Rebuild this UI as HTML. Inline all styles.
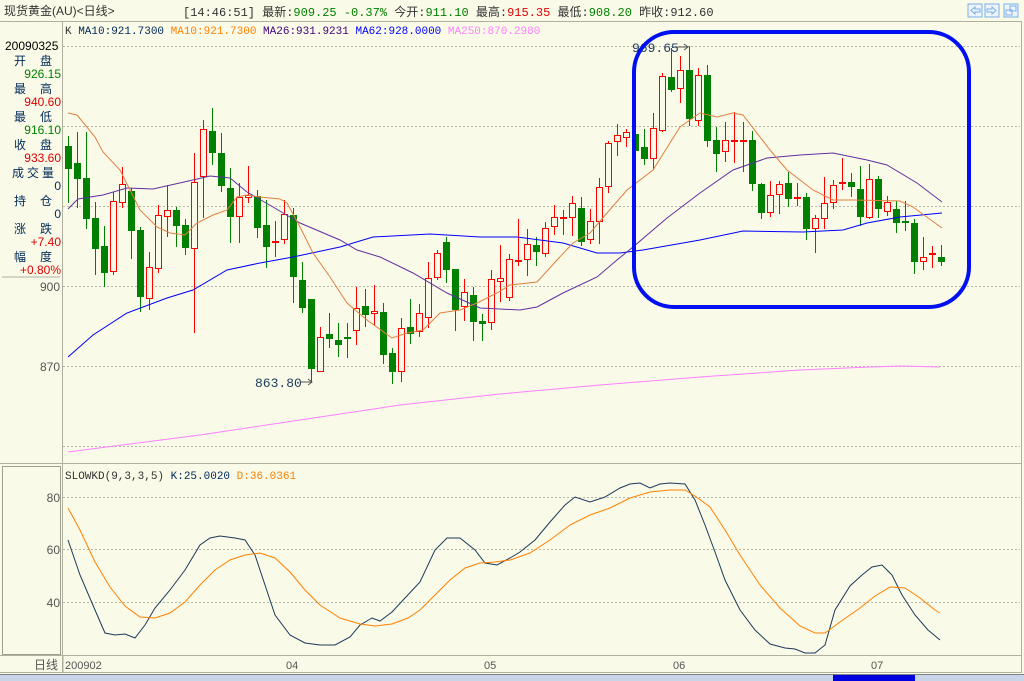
<!DOCTYPE html>
<html><head><meta charset="utf-8"><style>
html,body{margin:0;padding:0;width:1024px;height:681px;overflow:hidden;background:#fafae8;font-family:"Liberation Sans","Noto Sans CJK SC",sans-serif;}
#c{position:absolute;left:0;top:0}
</style></head><body>
<svg id="c" width="1024" height="681" xmlns="http://www.w3.org/2000/svg" font-family="Liberation Mono, Noto Sans CJK SC, monospace">
<rect width="1024" height="681" fill="#fafae8"/>
<line x1="0" y1="21.5" x2="1022" y2="21.5" stroke="#b0b0a0"/>
<text x="4" y="15" font-size="12" fill="#333" font-family="Liberation Sans, Noto Sans CJK SC, sans-serif">现货黄金(AU)&lt;日线&gt;</text>
<text x="183" y="16" font-size="12" fill="#333"><tspan>[14:46:51] 最新:</tspan><tspan fill="#008000">909.25 -0.37%</tspan><tspan> 今开:</tspan><tspan fill="#008000">911.10</tspan><tspan> 最高:</tspan><tspan fill="#e00000">915.35</tspan><tspan> 最低:</tspan><tspan fill="#008000">908.20</tspan><tspan> 昨收:912.60</tspan></text>
<g fill="#eef4fb" stroke="#7ab0e8"><rect x="968" y="4" width="14" height="13"/><rect x="985" y="4" width="14" height="13"/><rect x="1004" y="4" width="14" height="13"/></g>
<g fill="none" stroke="#7ab0e8"><path d="M971 10.5 L975 7 V9 H980 V12 H975 V14 Z"/><path d="M996 10.5 L992 7 V9 H987 V12 H992 V14 Z"/><rect x="1010" y="6" width="6" height="5"/><rect x="1006" y="10" width="6" height="5"/></g>
<line x1="1021.5" y1="22" x2="1021.5" y2="672" stroke="#b0b0a0"/>
<!-- left panel -->
<line x1="62.5" y1="22" x2="62.5" y2="672" stroke="#b0b0a0"/>
<line x1="0" y1="463.5" x2="1022" y2="463.5" stroke="#b0b0a0"/>
<line x1="0" y1="655.5" x2="1022" y2="655.5" stroke="#b0b0a0"/>
<line x1="2" y1="277" x2="60" y2="277" stroke="#b0b0a0"/>
<rect x="2.5" y="466.5" width="58" height="188" fill="none" stroke="#a0a090"/>
<line x1="0" y1="672.5" x2="1022" y2="672.5" stroke="#b0b0a0"/>
<g font-size="12" font-family="Liberation Sans, Noto Sans CJK SC, sans-serif">
<text x="5" y="50" fill="#000">20090325</text>
<text x="14" y="65" fill="#002a5a">开</text><text x="40" y="65" fill="#002a5a">盘</text>
<text x="61" y="78" fill="#008000" text-anchor="end">926.15</text>
<text x="14" y="93" fill="#002a5a">最</text><text x="40" y="93" fill="#002a5a">高</text>
<text x="61" y="106" fill="#e00000" text-anchor="end">940.60</text>
<text x="14" y="121" fill="#002a5a">最</text><text x="40" y="121" fill="#002a5a">低</text>
<text x="61" y="134" fill="#008000" text-anchor="end">916.10</text>
<text x="14" y="149" fill="#002a5a">收</text><text x="40" y="149" fill="#002a5a">盘</text>
<text x="61" y="162" fill="#e00000" text-anchor="end">933.60</text>
<text x="12" y="177" fill="#002a5a" letter-spacing="3">成交量</text>
<text x="61" y="190" fill="#002a5a" text-anchor="end">0</text>
<text x="14" y="205" fill="#002a5a">持</text><text x="40" y="205" fill="#002a5a">仓</text>
<text x="61" y="218" fill="#002a5a" text-anchor="end">0</text>
<text x="14" y="233" fill="#002a5a">涨</text><text x="40" y="233" fill="#002a5a">跌</text>
<text x="61" y="246" fill="#e00000" text-anchor="end">+7.40</text>
<text x="14" y="261" fill="#002a5a">幅</text><text x="40" y="261" fill="#002a5a">度</text>
<text x="61" y="274" fill="#e00000" text-anchor="end">+0.80%</text>
<text x="60" y="291" fill="#555" text-anchor="end">900</text>
<text x="60" y="371" fill="#555" text-anchor="end">870</text>
<text x="60" y="502" fill="#555" text-anchor="end">80</text>
<text x="60" y="554" fill="#555" text-anchor="end">60</text>
<text x="60" y="607" fill="#555" text-anchor="end">40</text>
<text x="58" y="669" fill="#555" text-anchor="end">日线</text>
<text x="65" y="669" fill="#555" font-size="11">200902</text>
<text x="286" y="669" fill="#555" font-size="11">04</text>
<text x="484" y="669" fill="#555" font-size="11">05</text>
<text x="673" y="669" fill="#555" font-size="11">06</text>
<text x="871" y="669" fill="#555" font-size="11">07</text>
</g>
<g stroke="#b8b8a8" stroke-dasharray="2,2"><line x1="63" y1="46.5" x2="1020" y2="46.5"/><line x1="63" y1="126.5" x2="1020" y2="126.5"/><line x1="63" y1="206.5" x2="1020" y2="206.5"/><line x1="63" y1="286.5" x2="1020" y2="286.5"/><line x1="63" y1="366.5" x2="1020" y2="366.5"/><line x1="63" y1="446.5" x2="1020" y2="446.5"/><line x1="63" y1="497.5" x2="1020" y2="497.5"/><line x1="63" y1="549.5" x2="1020" y2="549.5"/><line x1="63" y1="602.5" x2="1020" y2="602.5"/></g>
<line x1="63" y1="672" x2="63" y2="656" stroke="#b0b0a0"/>
<text x="65" y="34" font-size="11"><tspan fill="#333">K </tspan><tspan fill="#002a5a">MA10:921.7300 </tspan><tspan fill="#ff8000">MA10:921.7300 </tspan><tspan fill="#400080">MA26:931.9231 </tspan><tspan fill="#0000ff">MA62:928.0000 </tspan><tspan fill="#ff80ff">MA250:870.2980</tspan></text>
<text x="65" y="479" font-size="11"><tspan fill="#333">SLOWKD(9,3,3,5) </tspan><tspan fill="#002a5a">K:25.0020 </tspan><tspan fill="#ff8000">D:36.0361</tspan></text>
<g id="cand"></g>
<g id="lines" fill="none"></g>
<text x="632" y="52" font-size="13" fill="#1a3a5a">969.65</text>
<path d="M676 47 H688 M684 44 L688 47 L684 50" stroke="#555" fill="none"/>
<text x="255" y="387" font-size="13" fill="#1a3a5a">863.80</text>
<path d="M300 382 H312 M308 379 L312 382 L308 385" stroke="#555" fill="none"/>
<rect x="634" y="32" width="335" height="275" rx="40" fill="none" stroke="#0010f0" stroke-width="4"/>
<rect x="0" y="675" width="1024" height="6" fill="#c8d4e8"/>
<rect x="833" y="675" width="82" height="6" fill="#0000e0"/>
<line x1="0" y1="674.5" x2="1024" y2="674.5" stroke="#808080"/>
</svg>
<script>
var C=[[68,146,169,136,203,0],[77,163,179,132,208,0],[86,178,219,132,229,0],[95,218,249,202,275,0],[104,246,273,226,287,0],[113,201,272,192,275,1],[122,184,203,167,208,1],[131,191,231,188,259,0],[140,230,297,227,312,0],[149,267,299,252,310,1],[158,215,269,205,273,1],[167,210,217,185,237,1],[176,210,226,207,247,0],[185,225,248,219,255,0],[194,182,249,153,333,1],[203,129,177,120,218,1],[212,131,153,108,165,0],[221,153,186,133,192,0],[230,188,217,168,243,0],[239,197,217,183,243,1],[248,195,198,166,203,1],[257,196,228,190,238,0],[266,225,247,200,268,0],[275,241,243,221,257,1],[284,214,240,200,244,1],[293,215,277,208,303,0],[302,280,308,262,313,0],[311,299,369,299,383,0],[320,337,372,327,372,1],[329,334,339,313,348,0],[338,340,345,323,357,0],[347,337,339,323,358,0],[356,308,331,287,345,1],[365,306,315,289,327,0],[374,311,314,285,326,1],[383,312,355,303,364,0],[392,353,372,348,384,0],[401,328,372,318,382,1],[410,327,334,299,344,0],[419,313,332,304,337,1],[428,278,318,262,328,1],[437,253,278,250,280,1],[446,242,270,237,283,0],[455,269,310,269,331,0],[464,292,307,279,321,1],[473,295,322,287,341,0],[482,321,324,314,341,0],[491,279,323,270,330,1],[500,278,282,245,302,1],[509,259,298,254,301,1],[518,260,262,219,266,1],[527,244,260,229,276,1],[536,245,252,237,266,0],[545,228,254,222,257,1],[554,217,227,205,235,1],[563,217,219,210,235,1],[572,203,218,196,236,1],[581,208,242,197,246,0],[590,221,240,209,244,1],[599,187,222,178,244,1],[608,143,187,141,193,1],[617,135,142,124,156,1],[626,132,138,129,147,1],[635,134,151,118,160,0],[644,147,159,129,165,0],[653,128,159,113,170,1],[662,76,131,73,132,1],[671,77,90,48,92,0],[680,70,89,56,103,1],[689,70,119,46,126,0],[698,75,121,68,126,1],[707,75,141,65,147,0],[716,140,154,127,172,0],[725,140,152,122,162,1],[734,140,141,112,163,1],[743,140,142,122,172,1],[752,140,184,131,191,0],[761,184,213,183,219,0],[770,195,213,181,217,1],[779,184,195,181,214,1],[788,183,199,172,207,0],[797,197,199,183,206,1],[806,197,229,193,240,0],[815,218,229,215,253,1],[824,203,219,177,229,1],[833,185,203,180,209,1],[842,182,184,158,190,1],[851,182,187,173,197,0],[860,189,217,166,226,0],[869,179,218,164,219,1],[878,179,209,176,218,0],[887,202,212,196,216,1],[896,209,223,201,233,0],[905,221,223,201,231,0],[914,223,262,219,274,0],[923,257,262,237,270,1],[932,253,255,246,268,1],[941,257,262,245,266,0]];
var s='';C.forEach(function(c){var x=c[0],r=c[5],col=r?'#ff0000':'#008000';s+='<line x1="'+(x+.5)+'" y1="'+c[3]+'" x2="'+(x+.5)+'" y2="'+c[4]+'" stroke="'+col+'"/>';var h=Math.max(c[2]-c[1],1);if(r)s+='<rect x="'+(x-2.5)+'" y="'+(c[1]+.5)+'" width="6" height="'+(h>2?h-1:1)+'" fill="#fafae8" stroke="#ff0000"/>';else s+='<rect x="'+(x-3)+'" y="'+c[1]+'" width="7" height="'+h+'" fill="#008000"/>';});
document.getElementById('cand').innerHTML=s;
function pl(p,col,w){return '<polyline points="'+p+'" stroke="'+col+'" stroke-width="'+(w||1)+'"/>';}
var L='';
L+=pl('68,452 200,435 300,420 400,405 500,394 600,385 700,377 800,370 870,367 900,366 940,367','#ff80ff');
L+=pl('68,357 93,335 127,313 167,298 193,290 227,270 260,263 293,257 340,247 373,237 430,234 480,237 517,237 563,243 597,253 620,253 643,250 700,240 743,231 803,232 843,230 867,223 900,217 942,213','#0000ff');
L+=pl('68,209 78,199 103,195 127,188 153,189 193,180 210,176 230,178 247,192 273,207 300,223 340,240 357,250 380,257 413,273 447,293 480,308 520,310 537,307 563,293 597,277 617,260 633,247 667,218 700,193 733,170 767,158 800,155 833,153 867,160 887,165 917,183 942,202','#6030a0');
L+=pl('68,113 77,115 95,137 103,152 120,170 130,190 140,210 157,227 170,233 185,235 197,223 213,215 227,210 237,197 247,195 260,197 280,199 287,203 300,227 313,253 330,277 347,303 367,320 392,338 407,333 423,330 440,313 460,310 477,303 497,293 510,285 537,282 557,260 573,243 590,233 607,213 627,190 653,170 680,127 700,113 717,117 733,113 743,115 770,150 787,170 813,190 833,200 853,200 900,201 913,207 942,228','#e08040');
L+=pl('68,540 80,575 95,610 105,633 115,635 125,634 135,638 145,625 155,608 170,590 185,570 200,545 210,538 220,536 235,538 245,540 255,555 265,585 275,615 290,635 305,643 320,645 335,645 350,637 360,625 372,618 380,621 392,612 405,598 420,582 435,550 447,538 460,538 475,550 485,563 497,565 510,558 520,552 535,540 550,522 565,505 575,497 590,502 605,497 620,488 630,484 640,483 650,488 660,484 670,483 685,484 695,500 705,525 715,552 725,580 740,610 755,630 770,644 785,648 795,649 805,653 815,653 825,645 835,610 850,586 862,575 872,567 882,565 892,575 902,595 915,615 928,630 940,640','#1a3a5a');
L+=pl('68,508 80,530 95,562 110,587 125,606 140,617 155,618 170,613 185,602 200,585 215,570 230,560 245,555 260,553 275,558 290,572 305,590 320,605 340,618 360,624 375,626 392,624 408,618 420,610 435,595 450,580 465,568 480,563 495,562 510,560 530,553 550,540 570,525 590,515 610,508 630,498 650,492 670,490 685,490 695,496 710,507 725,530 740,555 760,585 780,608 800,626 815,633 825,633 840,622 860,608 875,596 890,587 905,588 920,598 935,610 940,613','#ff8000');
document.getElementById('lines').innerHTML=L;
</script>
</body></html>
